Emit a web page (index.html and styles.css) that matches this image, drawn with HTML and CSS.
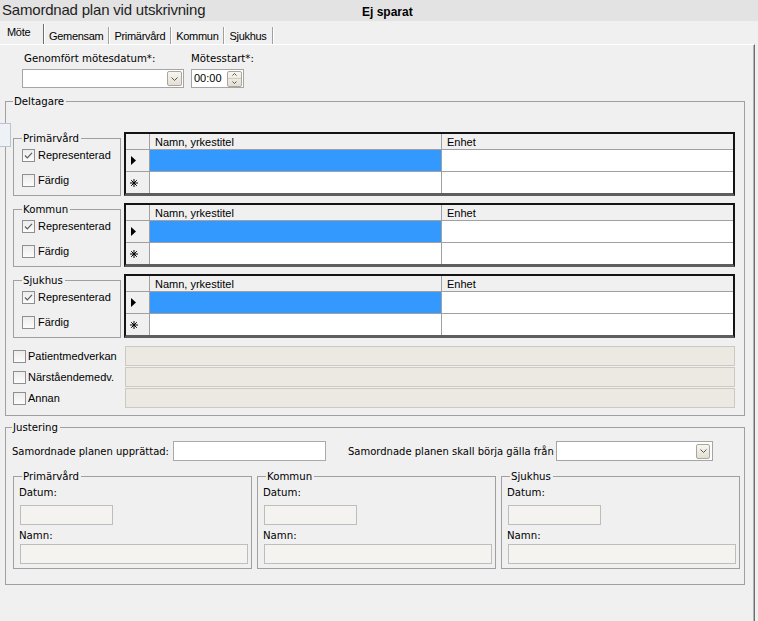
FILE: index.html
```html
<!DOCTYPE html>
<html lang="sv">
<head>
<meta charset="utf-8">
<title>Samordnad plan vid utskrivning</title>
<link rel="stylesheet" href="styles.css">
</head>
<body>
<div class="window">
  <header class="titlebar">
    <div class="title">Samordnad plan vid utskrivning</div>
    <div class="status">Ej sparat</div>
  </header>
  <nav class="tabs">
    <div class="tab active">Möte</div>
    <div class="tab">Gemensam</div>
    <div class="tab">Primärvård</div>
    <div class="tab">Kommun</div>
    <div class="tab">Sjukhus</div>
  </nav>
  <main class="panel">
    <div class="stub"></div>
    <div class="meeting">
      <div class="field date-field">
        <div class="vlabel">Genomfört mötesdatum*:</div>
        <div class="combo date-combo">
          <span class="dd-btn"><svg width="7" height="4" viewBox="0 0 7 4"><polyline points="0.5,0.5 3.5,3.5 6.5,0.5" fill="none" stroke="#555" stroke-width="1"/></svg></span>
        </div>
      </div>
      <div class="field">
        <div class="vlabel">Mötesstart*:</div>
        <div class="timebox">
          <span class="time">00:00</span>
          <span class="spin">
            <span class="spin-half"><svg width="5" height="3" viewBox="0 0 5 3"><polyline points="0.5,2.5 2.5,0.5 4.5,2.5" fill="none" stroke="#555" stroke-width="1"/></svg></span>
            <span class="spin-half spin-down"><svg width="5" height="3" viewBox="0 0 5 3"><polyline points="0.5,0.5 2.5,2.5 4.5,0.5" fill="none" stroke="#555" stroke-width="1"/></svg></span>
          </span>
        </div>
      </div>
    </div>

    <fieldset class="group deltagare">
      <legend>Deltagare</legend>

      <div class="part-row">
        <fieldset class="group party">
          <legend>Primärvård</legend>
          <div class="check-row"><span class="cb"><svg width="11" height="11" viewBox="0 0 11 11"><polyline points="2,5.5 4.3,7.8 9,2.8" fill="none" stroke="#5c5c5c" stroke-width="1.2"/></svg></span><span>Representerad</span></div>
          <div class="check-row second"><span class="cb"></span><span>Färdig</span></div>
        </fieldset>
        <div class="grid">
          <div class="gh"></div><div class="gh">Namn, yrkestitel</div><div class="gh">Enhet</div>
          <div class="rh"><svg width="5" height="9" viewBox="0 0 5 9"><polygon points="0,0 5,4.5 0,9" fill="#000"/></svg></div><div class="cell sel"></div><div class="cell"></div>
          <div class="rh new"><svg width="8" height="8" viewBox="0 0 8 8"><path d="M4 0V8M0 4H8M1.2 1.2L6.8 6.8M6.8 1.2L1.2 6.8" stroke="#000" stroke-width="1" fill="none"/></svg></div><div class="cell"></div><div class="cell"></div>
        </div>
      </div>

      <div class="part-row">
        <fieldset class="group party">
          <legend>Kommun</legend>
          <div class="check-row"><span class="cb"><svg width="11" height="11" viewBox="0 0 11 11"><polyline points="2,5.5 4.3,7.8 9,2.8" fill="none" stroke="#5c5c5c" stroke-width="1.2"/></svg></span><span>Representerad</span></div>
          <div class="check-row second"><span class="cb"></span><span>Färdig</span></div>
        </fieldset>
        <div class="grid">
          <div class="gh"></div><div class="gh">Namn, yrkestitel</div><div class="gh">Enhet</div>
          <div class="rh"><svg width="5" height="9" viewBox="0 0 5 9"><polygon points="0,0 5,4.5 0,9" fill="#000"/></svg></div><div class="cell sel"></div><div class="cell"></div>
          <div class="rh new"><svg width="8" height="8" viewBox="0 0 8 8"><path d="M4 0V8M0 4H8M1.2 1.2L6.8 6.8M6.8 1.2L1.2 6.8" stroke="#000" stroke-width="1" fill="none"/></svg></div><div class="cell"></div><div class="cell"></div>
        </div>
      </div>

      <div class="part-row">
        <fieldset class="group party">
          <legend>Sjukhus</legend>
          <div class="check-row"><span class="cb"><svg width="11" height="11" viewBox="0 0 11 11"><polyline points="2,5.5 4.3,7.8 9,2.8" fill="none" stroke="#5c5c5c" stroke-width="1.2"/></svg></span><span>Representerad</span></div>
          <div class="check-row second"><span class="cb"></span><span>Färdig</span></div>
        </fieldset>
        <div class="grid">
          <div class="gh"></div><div class="gh">Namn, yrkestitel</div><div class="gh">Enhet</div>
          <div class="rh"><svg width="5" height="9" viewBox="0 0 5 9"><polygon points="0,0 5,4.5 0,9" fill="#000"/></svg></div><div class="cell sel"></div><div class="cell"></div>
          <div class="rh new"><svg width="8" height="8" viewBox="0 0 8 8"><path d="M4 0V8M0 4H8M1.2 1.2L6.8 6.8M6.8 1.2L1.2 6.8" stroke="#000" stroke-width="1" fill="none"/></svg></div><div class="cell"></div><div class="cell"></div>
        </div>
      </div>

      <div class="extras">
        <div class="extra-row"><div class="extra-label"><span class="cb"></span><span>Patientmedverkan</span></div><div class="disabled-box"></div></div>
        <div class="extra-row"><div class="extra-label"><span class="cb"></span><span>Närståendemedv.</span></div><div class="disabled-box"></div></div>
        <div class="extra-row"><div class="extra-label"><span class="cb"></span><span>Annan</span></div><div class="disabled-box"></div></div>
      </div>
    </fieldset>

    <fieldset class="group justering">
      <legend>Justering</legend>
      <div class="just-row">
        <span class="vlabel just-label">Samordnade planen upprättad:</span>
        <div class="textbox upprattad"></div>
        <span class="vlabel just-label2">Samordnade planen skall börja gälla från</span>
        <div class="combo start-combo">
          <span class="dd-btn small"><svg width="7" height="4" viewBox="0 0 7 4"><polyline points="0.5,0.5 3.5,3.5 6.5,0.5" fill="none" stroke="#555" stroke-width="1"/></svg></span>
        </div>
      </div>
      <div class="sign-row">
        <fieldset class="group sign">
          <legend>Primärvård</legend>
          <div class="vlabel">Datum:</div>
          <div class="dbox datum"></div>
          <div class="vlabel namn-label">Namn:</div>
          <div class="dbox namn"></div>
        </fieldset>
        <fieldset class="group sign">
          <legend>Kommun</legend>
          <div class="vlabel">Datum:</div>
          <div class="dbox datum"></div>
          <div class="vlabel namn-label">Namn:</div>
          <div class="dbox namn"></div>
        </fieldset>
        <fieldset class="group sign">
          <legend>Sjukhus</legend>
          <div class="vlabel">Datum:</div>
          <div class="dbox datum"></div>
          <div class="vlabel namn-label">Namn:</div>
          <div class="dbox namn"></div>
        </fieldset>
      </div>
    </fieldset>
  </main>
</div>
</body>
</html>
```

FILE: styles.css
```css
html, body {
  margin: 0;
  padding: 0;
}
body {
  width: 758px;
  height: 621px;
  overflow: hidden;
  background: #f0f0f0;
  font-family: "Liberation Sans", Arial, sans-serif;
  font-size: 11px;
  color: #000;
}

/* title bar */
.titlebar {
  display: grid;
  grid-template-columns: 362px auto;
  height: 21px;
  background: #e3e3e3;
}
.title {
  padding-left: 2px;
  font-size: 15px;
  line-height: 20px;
  letter-spacing: -0.2px;
  color: #1e1e1e;
  white-space: nowrap;
}
.status {
  font-weight: bold;
  font-size: 12px;
  line-height: 18px;
  padding-top: 3px;
  white-space: nowrap;
}

/* tabs */
.tabs {
  display: flex;
  align-items: flex-end;
  height: 23px;
}
.tab {
  box-sizing: border-box;
  height: 17px;
  padding: 3px 5px 0;
  line-height: 13px;
  letter-spacing: -0.3px;
  white-space: nowrap;
  border-right: 1px solid #a0a0a0;
  box-shadow: 1px 0 0 #ffffff;
}
.tab.active {
  width: 44px;
  height: 20px;
  padding: 2px 0 0 7px;
  border-right-color: #6f6f6f;
}

/* panel */
.panel {
  position: relative;
  box-sizing: border-box;
  width: 755px;
  height: 577px;
  border-top: 1px solid #ffffff;
  border-right: 1px solid #6e6e6e;
  box-shadow: inset -1px 0 0 #b4b4b4;
}
.stub {
  position: absolute;
  left: 0;
  top: 78px;
  width: 10px;
  height: 22px;
  background: #eef2f6;
  border: 1px solid #b8c4d0;
  border-left: none;
}

.vlabel {
  font-family: "DejaVu Sans", Verdana, sans-serif;
  font-size: 10.2px;
  line-height: 13px;
  white-space: nowrap;
}

/* meeting row */
.meeting {
  display: flex;
  gap: 7px;
  padding: 7px 0 0 22px;
}
.field {
  display: flex;
  flex-direction: column;
  gap: 4px;
}
.date-field .vlabel {
  padding-left: 2px;
}
.combo {
  box-sizing: border-box;
  height: 19px;
  border: 1px solid #a5a5a5;
  background: #ffffff;
  display: flex;
  align-items: center;
  justify-content: flex-end;
  padding-right: 1px;
}
.date-combo {
  width: 162px;
}
.dd-btn {
  box-sizing: border-box;
  width: 15px;
  height: 15px;
  border: 1px solid #aaa69b;
  border-radius: 2px;
  background: linear-gradient(#f8f6f1, #e3dfd3);
  display: flex;
  align-items: center;
  justify-content: center;
}
.dd-btn.small {
  width: 14px;
}
.timebox {
  box-sizing: border-box;
  width: 53px;
  height: 19px;
  border: 1px solid #a5a5a5;
  background: #ffffff;
  display: flex;
  align-items: center;
  padding: 0 1px 0 2px;
}
.time {
  line-height: 13px;
}
.spin {
  margin-left: auto;
  box-sizing: border-box;
  width: 15px;
  height: 16px;
  border: 1px solid #aaa69b;
  border-radius: 2px;
  background: linear-gradient(#f8f6f1, #e3dfd3);
  display: flex;
  flex-direction: column;
}
.spin-half {
  flex: 1;
  display: flex;
  align-items: center;
  justify-content: center;
}
.spin-down {
  border-top: 1px solid #cfcbc0;
}

/* group boxes */
.group {
  margin: 0;
  min-width: 0;
  border: 1px solid #a0a0a0;
}
.group > legend {
  margin: 0;
  padding: 0 2px 0 1px;
  font-family: "DejaVu Sans", Verdana, sans-serif;
  font-size: 10.2px;
  line-height: 13px;
  white-space: nowrap;
}

.deltagare {
  box-sizing: border-box;
  width: 740px;
  margin: 7px 0 0 5px;
  padding: 24px 9px 7px 7px;
}
.part-row {
  display: flex;
  align-items: flex-start;
  gap: 3px;
}
.part-row + .part-row {
  margin-top: 7px;
}
.party {
  flex: none;
  box-sizing: border-box;
  width: 108px;
  padding: 4px 0 8px 8px;
}
.check-row {
  display: flex;
  align-items: center;
  gap: 3px;
  height: 13px;
  line-height: 13px;
  white-space: nowrap;
}
.check-row.second {
  margin-top: 12px;
}
.cb {
  flex: none;
  box-sizing: border-box;
  width: 13px;
  height: 13px;
  border: 1px solid #8f8f8f;
  background: linear-gradient(#ededed, #fbfbfb);
  display: flex;
}

/* data grid */
.grid {
  flex: 1;
  display: grid;
  grid-template-columns: 23px 291px 1fr;
  grid-template-rows: 15px 21px 21px;
  gap: 1px;
  background: #a0a0a0;
  border: 2px solid #141414;
  border-bottom: 3px solid #5e5e5e;
}
.gh {
  background: #f0f0f0;
  padding: 2px 0 0 5px;
  line-height: 13px;
  overflow: hidden;
  white-space: nowrap;
}
.rh {
  background: #f0f0f0;
  display: flex;
  align-items: center;
  padding-left: 5px;
}
.rh.new {
  padding-left: 4px;
}
.cell {
  background: #ffffff;
}
.cell.sel {
  background: #3399ff;
}

/* extra rows */
.extras {
  margin-top: 8px;
  display: flex;
  flex-direction: column;
  gap: 1px;
}
.extra-row {
  display: flex;
  height: 20px;
}
.extra-label {
  flex: none;
  width: 112px;
  display: flex;
  align-items: center;
  gap: 2px;
  white-space: nowrap;
}
.disabled-box {
  flex: 1;
  box-sizing: border-box;
  background: #ebe9e2;
  border: 1px solid #cbc9c2;
}

/* justering */
.justering {
  box-sizing: border-box;
  width: 740px;
  margin: 5px 0 0 5px;
  padding: 7px 4px 15px 6px;
}
.just-row {
  display: flex;
  align-items: center;
  height: 20px;
}
.just-label,
.just-label2 {
  font-size: 10px;
}
.just-label {
  width: 161px;
}
.textbox {
  box-sizing: border-box;
  height: 20px;
  background: #ffffff;
  border: 1px solid #a9a9a9;
}
.upprattad {
  width: 153px;
}
.just-label2 {
  width: 208px;
  margin-left: 22px;
}
.start-combo {
  width: 157px;
  height: 20px;
  padding-right: 2px;
}
.sign-row {
  display: flex;
  gap: 5px;
  margin: 9px 0 0 1px;
}
.sign {
  flex: none;
  box-sizing: border-box;
  width: 239px;
  padding: 3px 0 4px 5px;
}
.sign > legend {
  margin-left: 3px;
}
.dbox {
  box-sizing: border-box;
  height: 20px;
  margin-left: 1px;
  background: #f4f3ef;
  border: 1px solid #bdbdbd;
}
.datum {
  width: 93px;
  margin-top: 6px;
}
.namn-label {
  margin-top: 4px;
}
.namn {
  width: 228px;
  margin-top: 2px;
}
```
